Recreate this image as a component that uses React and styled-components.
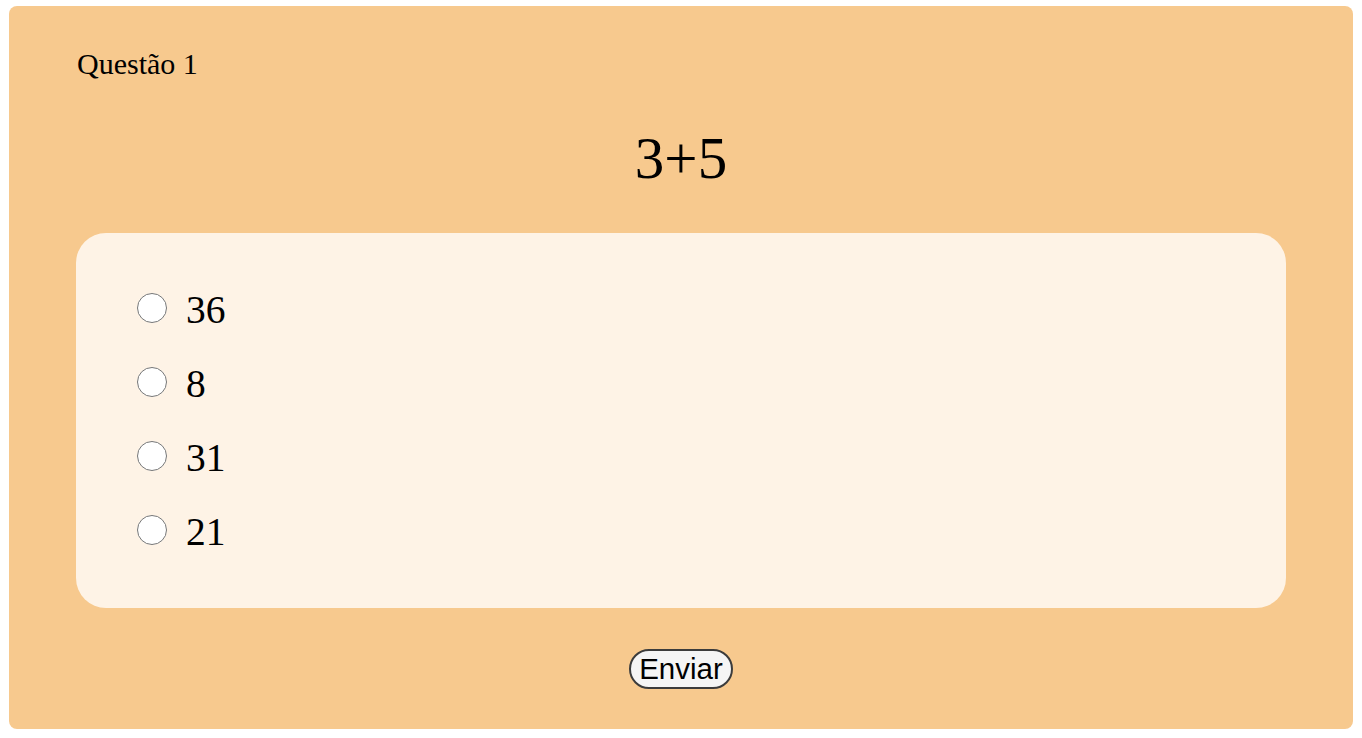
import React, { useState } from "react";
import styled, { createGlobalStyle } from "styled-components";

const GlobalStyle = createGlobalStyle`
  body {
    margin: 0;
    background: #ffffff;
    font-family: "Liberation Serif", "Times New Roman", serif;
  }
`;

const Card = styled.div`
  margin: 6px 9px;
  height: 723px;
  box-sizing: border-box;
  padding: 40px 67px 0 67px;
  background-color: #f7c98e;
  border-radius: 8px;
  display: flex;
  flex-direction: column;
`;

const Title = styled.div`
  font-size: 30px;
  line-height: 35px;
  padding-left: 1px;
  color: #000;
`;

const Question = styled.h1`
  margin: 44px 0 0 0;
  font-size: 59px;
  line-height: 67px;
  font-weight: 400;
  text-align: center;
  color: #000;
`;

const Options = styled.div`
  margin-top: 41px;
  height: 375px;
  box-sizing: border-box;
  padding: 40px 0 39px 61px;
  background-color: #fef3e6;
  border-radius: 30px;
  display: flex;
  flex-direction: column;
`;

const Row = styled.label`
  height: 74px;
  display: flex;
  align-items: center;
  gap: 19px;
  font-size: 39.5px;
  color: #000;
`;

const Radio = styled.input`
  width: 30px;
  height: 30px;
  margin: 0 0 5px 0;
`;

const Footer = styled.div`
  margin-top: 41px;
  display: flex;
  justify-content: center;
`;

const Button = styled.button`
  height: 40px;
  width: 104px;
  padding: 0;
  font-family: "Liberation Sans", Arial, sans-serif;
  font-size: 29.5px;
  color: #000;
  background-color: #f5f5f5;
  border: 2px solid #3c3c3c;
  border-radius: 20px;
`;

const answers = ["36", "8", "31", "21"];

export default function App() {
  const [choice, setChoice] = useState(null);
  return (
    <>
      <GlobalStyle />
      <Card>
        <Title>Questão 1</Title>
        <Question>3+5</Question>
        <Options>
          {answers.map((a) => (
            <Row key={a}>
              <Radio
                type="radio"
                name="q1"
                checked={choice === a}
                onChange={() => setChoice(a)}
              />
              {a}
            </Row>
          ))}
        </Options>
        <Footer>
          <Button>Enviar</Button>
        </Footer>
      </Card>
    </>
  );
}
